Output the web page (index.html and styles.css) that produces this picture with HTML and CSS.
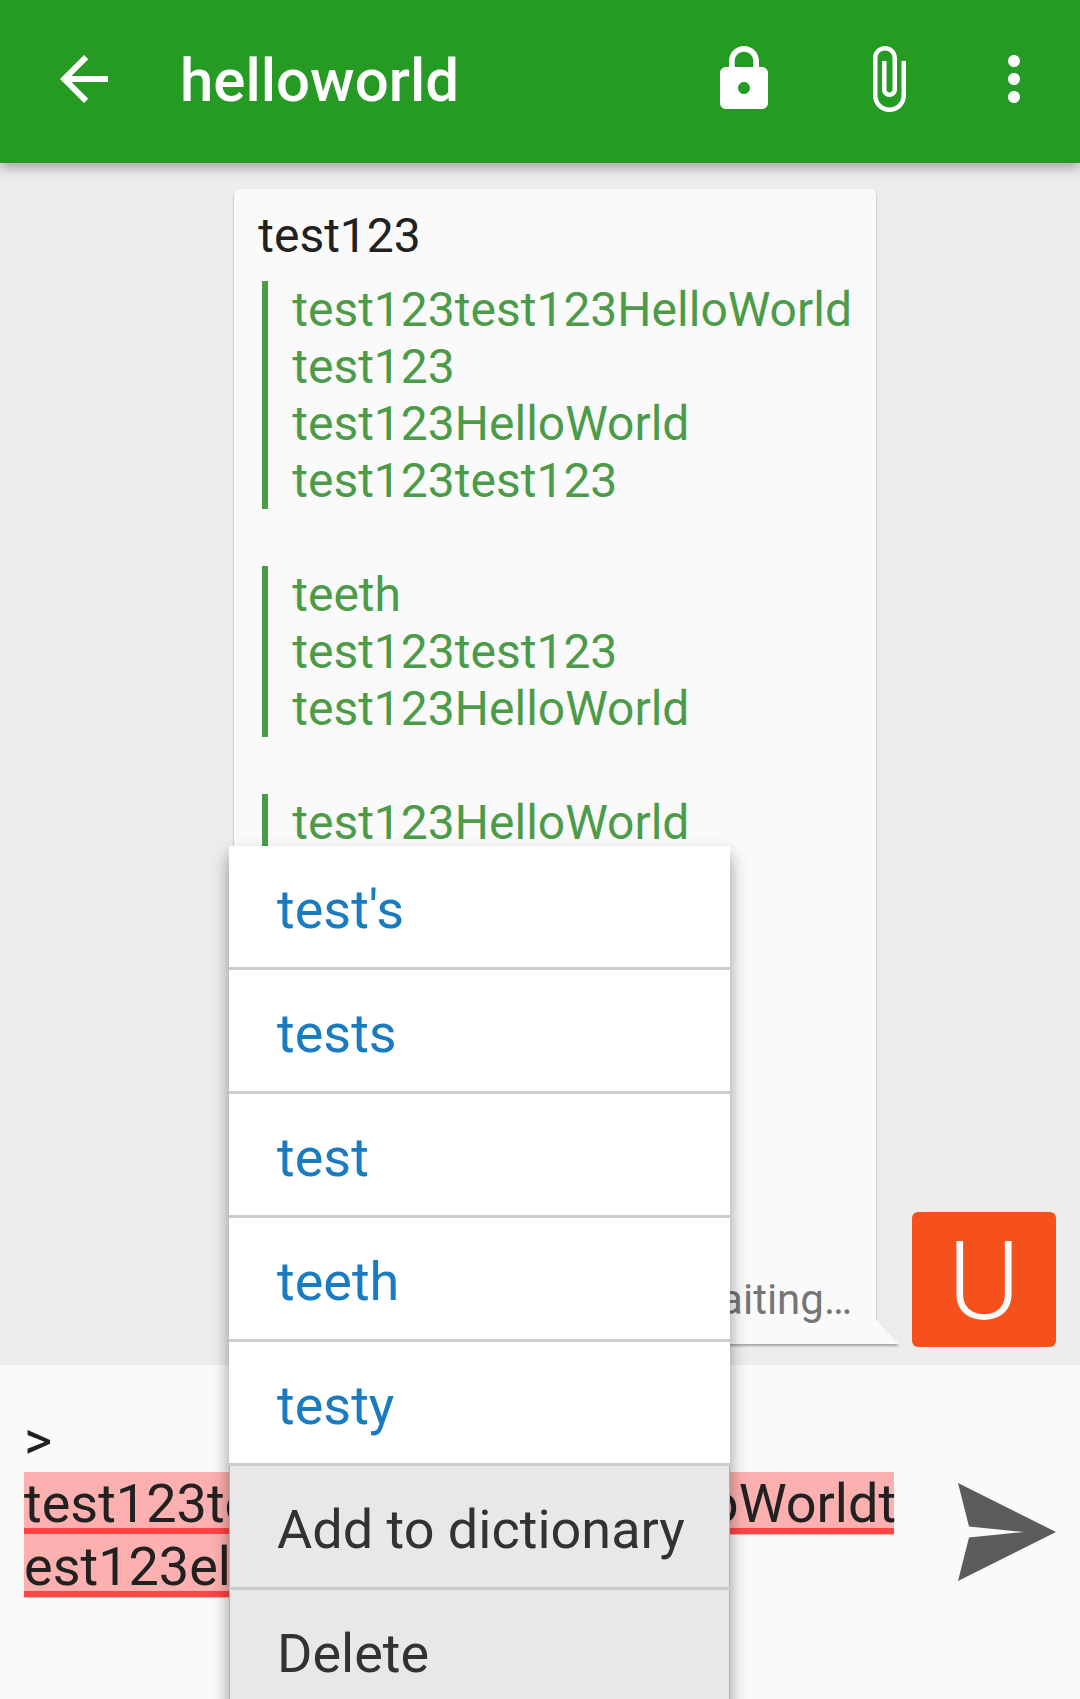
FILE: index.html
```html
<!DOCTYPE html>
<html lang="en">
<head>
<meta charset="utf-8">
<meta name="viewport" content="width=device-width, initial-scale=1">
<title>helloworld</title>
<link rel="stylesheet" href="styles.css">
</head>
<body>
<div class="app">
  <header class="toolbar">
    <button class="icon-button" type="button" aria-label="Back">
      <svg class="icon" viewBox="0 0 24 24"><path d="M20 11H7.83l5.59-5.59L12 4l-8 8 8 8 1.41-1.41L7.83 13H20z"/></svg>
    </button>
    <h1 class="title">helloworld</h1>
    <div class="actions">
      <button class="icon-button" type="button" aria-label="Encryption">
        <svg class="icon" viewBox="0 0 24 24"><path d="M18 8h-1V6c0-2.76-2.24-5-5-5S7 3.24 7 6v2H6c-1.1 0-2 .9-2 2v10c0 1.1.9 2 2 2h12c1.1 0 2-.9 2-2V10c0-1.1-.9-2-2-2zm-6 9c-1.1 0-2-.9-2-2s.9-2 2-2 2 .9 2 2-.9 2-2 2zm3.1-9H8.9V6c0-1.71 1.39-3.1 3.1-3.1 1.71 0 3.1 1.39 3.1 3.1v2z"/></svg>
      </button>
      <button class="icon-button" type="button" aria-label="Attach file">
        <svg class="icon" viewBox="0 0 24 24"><path d="M16.5 6v11.5c0 2.21-1.79 4-4 4s-4-1.79-4-4V5c0-1.38 1.12-2.5 2.5-2.5s2.5 1.12 2.5 2.5v10.5c0 .55-.45 1-1 1s-1-.45-1-1V6H10v9.500c0 1.380 1.120 2.500 2.500 2.500s2.500-1.120 2.500-2.500V5c0-2.210-1.790-4-4-4S7 2.790 7 5v12.500c0 3.040 2.460 5.500 5.500 5.500s5.500-2.460 5.500-5.500V6h-1.500z"/></svg>
      </button>
      <button class="icon-button more" type="button" aria-label="More options">
        <svg class="icon" viewBox="0 0 24 24"><path d="M12 8c1.100 0 2-.9 2-2s-.9-2-2-2-2 .9-2 2 .9 2 2 2zm0 2c-1.100 0-2 .9-2 2s.9 2 2 2 2-.9 2-2-.9-2-2-2zm0 6c-1.100 0-2 .9-2 2s.9 2 2 2 2-.9 2-2-.9-2-2-2z"/></svg>
      </button>
    </div>
  </header>

  <main class="conversation">
    <article class="bubble">
      <p class="line">test123</p>
      <blockquote class="quote">test123test123HelloWorld<br>test123<br>test123HelloWorld<br>test123test123</blockquote>
      <blockquote class="quote">teeth<br>test123test123<br>test123HelloWorld</blockquote>
      <blockquote class="quote">test123HelloWorld</blockquote>
      <p class="status">Waiting…</p>
    </article>
    <div class="avatar">U</div>
  </main>

  <form class="composer">
    <textarea class="input" rows="4" aria-label="Message" spellcheck="false">&gt;
test123test123eltest123HelloWorldtest123el</textarea>
    <button class="send" type="button" aria-label="Send message">
      <svg class="send-icon" viewBox="0 0 98 98"><path d="M0 0L98 49L0 98L11 54.500L66 49L11 43.500Z"/></svg>
    </button>
  </form>

  <div class="suggestions">
    <button class="item" type="button">test's</button>
    <button class="item" type="button">tests</button>
    <button class="item" type="button">test</button>
    <button class="item" type="button">teeth</button>
    <button class="item" type="button">testy</button>
    <button class="item action" type="button">Add to dictionary</button>
    <button class="item action" type="button">Delete</button>
  </div>
</div>
</body>
</html>
```
FILE: styles.css
```css
* {
  box-sizing: border-box;
}

body {
  margin: 0;
  font-family: Roboto, "Liberation Sans", sans-serif;
  color: #212121;
}

button {
  margin: 0;
  padding: 0;
  border: 0;
  background: none;
  color: inherit;
  font: inherit;
}

p,
h1,
blockquote {
  margin: 0;
}

.app {
  position: relative;
  display: flex;
  flex-direction: column;
  min-height: 100vh;
  overflow: hidden;
  background: #ededed;
}

/* Toolbar */

.toolbar {
  position: relative;
  display: flex;
  align-items: center;
  padding: 43px 30px 48px 48px;
  background: #259b24;
  color: #fff;
  box-shadow: 0 5px 12px rgba(0, 0, 0, 0.3);
}

.icon-button {
  display: flex;
}

.icon {
  width: 72px;
  height: 72px;
  fill: currentColor;
}

.title {
  flex: 1;
  padding: 4px 0 0 60px;
  font-size: 60px;
  font-weight: 500;
  line-height: 68px;
}

.actions {
  display: flex;
  gap: 72px;
}

.more {
  margin-left: -18px;
}

/* Conversation */

.conversation {
  flex: 1;
  display: flex;
  justify-content: flex-end;
  gap: 36px;
  padding: 26px 24px 18px;
}

.bubble {
  position: relative;
  display: flex;
  flex-direction: column;
  margin-bottom: 3px;
  padding: 18px 24px 20px;
  border-radius: 6px 6px 0 6px;
  background: #fafafa;
  font-size: 48px;
  line-height: 57px;
  filter: drop-shadow(0 2px 1px rgba(0, 0, 0, 0.3));
}

.bubble::after {
  content: "";
  position: absolute;
  left: 100%;
  bottom: 0;
  width: 23px;
  height: 24px;
  background: #fafafa;
  clip-path: polygon(0 0, 100% 100%, 0 100%);
}

.line {
  margin-bottom: 17px;
}

.quote {
  margin: 0 0 57px 4px;
  padding-left: 24px;
  border-left: 6px solid #4b9b49;
  color: #4b9b49;
}

.status {
  margin-top: auto;
  color: #757575;
  font-size: 42px;
  line-height: 49px;
  text-align: right;
}

.avatar {
  align-self: flex-end;
  width: 144px;
  height: 135px;
  padding-top: 4px;
  border-radius: 6px;
  background: #f6511d;
  color: #fafafa;
  font-size: 110px;
  font-weight: 300;
  line-height: 131px;
  text-align: center;
}

/* Composer */

.composer {
  display: flex;
  align-items: center;
  padding: 44px 24px 38px;
  gap: 48px;
  background: #fafafa;
}

/* The two misspelled rows carry a tint and a 6px underline */
.input {
  --mark: linear-gradient(#fcb0b0 56px, #ff4444 56px, #ff4444 62px, #fcb0b0 62px);
  flex: 1;
  min-width: 0;
  height: 252px;
  margin: 0;
  padding: 0;
  border: 0;
  outline: 0;
  resize: none;
  overflow: hidden;
  background:
    var(--mark) 0 63px / 870px 63px no-repeat,
    var(--mark) 0 126px / 240px 63px no-repeat;
  color: #212121;
  font: inherit;
  font-size: 54px;
  line-height: 63px;
  word-break: break-all;
}

.send {
  display: flex;
  padding-bottom: 6px;
}

.send-icon {
  width: 98px;
  height: 98px;
  fill: #5c5c5c;
}

/* Spelling suggestions popup */

.suggestions {
  position: absolute;
  top: 846px;
  left: 229px;
  display: flex;
  flex-direction: column;
  gap: 3px;
  background: #ccc;
  box-shadow: 0 9px 16px rgba(0, 0, 0, 0.4);
}

.item {
  padding: 32px 45px 26px 48px;
  background: #fff;
  color: #197bc0;
  font-size: 54px;
  line-height: 63px;
  text-align: left;
}

.action {
  background: #e8e8e8;
  box-shadow: inset 1px 0 #b0b0b0, inset -1px 0 #b0b0b0;
  color: #323232;
}
```
